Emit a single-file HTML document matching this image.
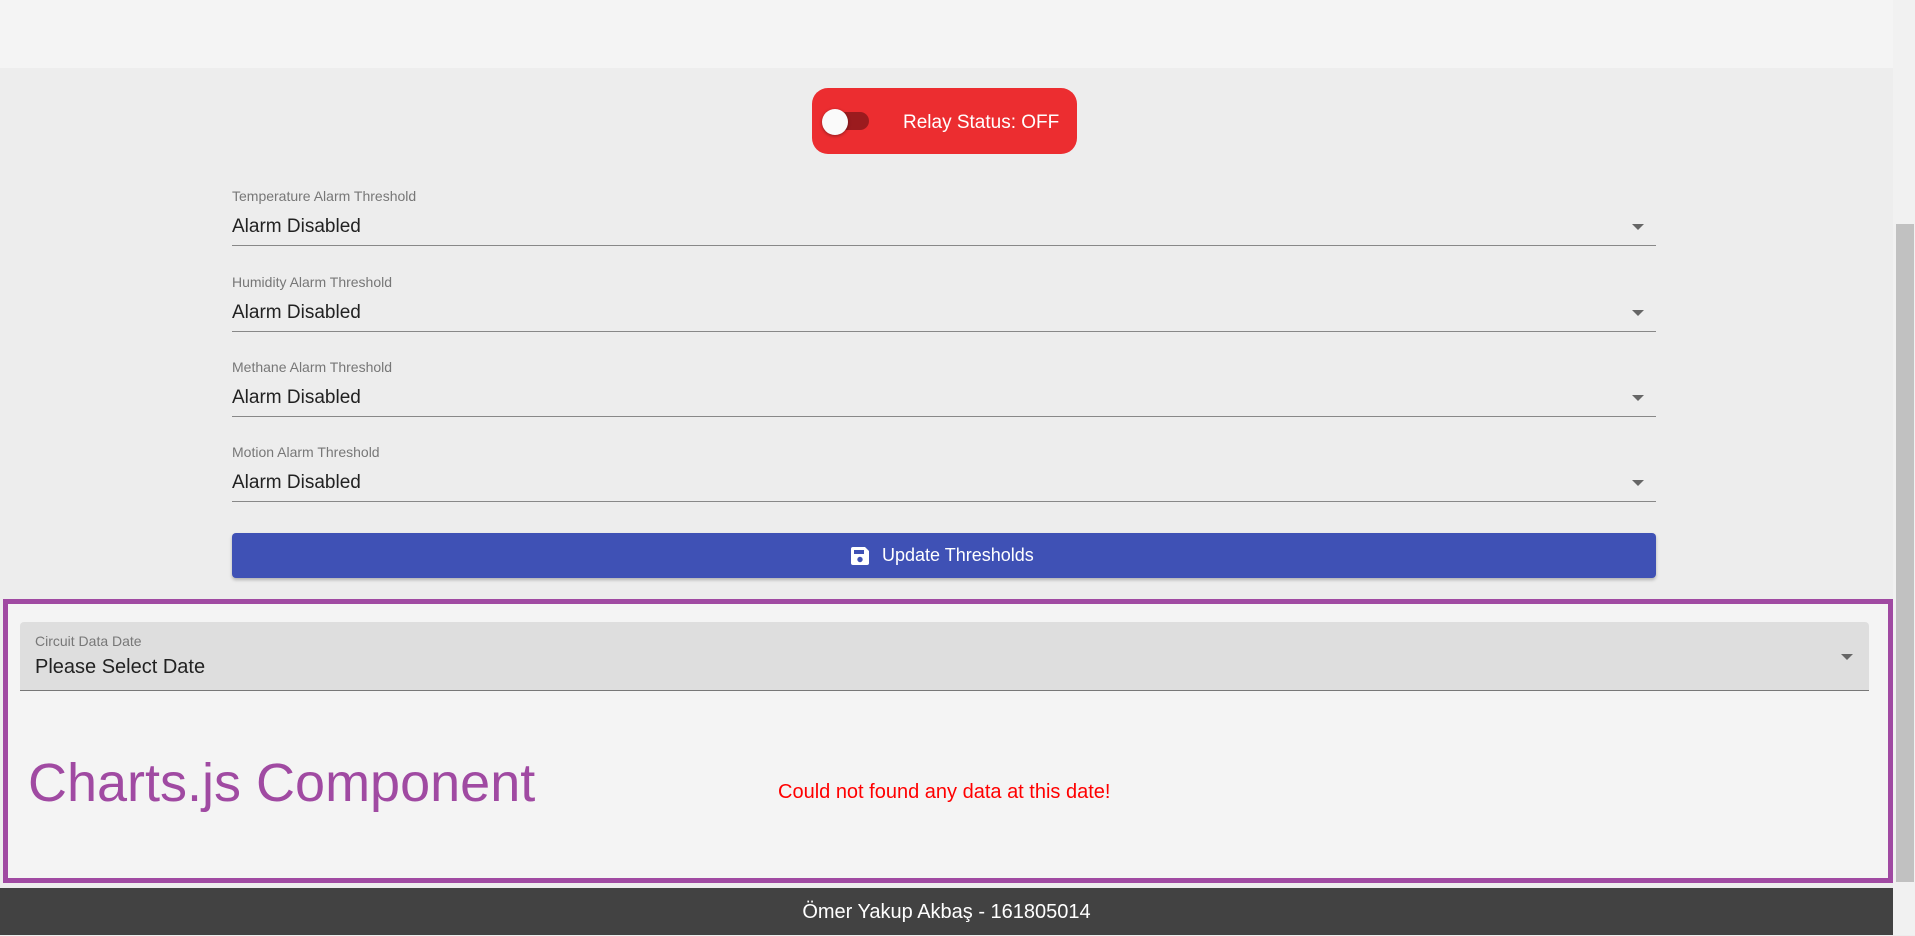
<!DOCTYPE html>
<html><head><meta charset="utf-8"><style>
*{box-sizing:border-box;margin:0;padding:0}
body{width:1915px;height:935px;overflow:hidden;background:#ededed;font-family:"Liberation Sans",Roboto,sans-serif;position:relative}
.top{position:absolute;left:0;top:0;width:1893px;height:68px;background:#f4f4f4}
.sb{position:absolute;left:1893px;top:0;width:22px;height:935px;background:#f1f1f1}
.thumb{position:absolute;left:1896px;top:224px;width:18px;height:658px;background:#c1c1c1}
.relay{position:absolute;left:812px;top:88px;width:265px;height:66px;background:#ec2d30;border-radius:16px;color:#fff}
.track{position:absolute;left:11px;top:24px;width:46px;height:18px;border-radius:9px;background:#9b1b1e}
.knob{position:absolute;left:10px;top:21px;width:26px;height:26px;border-radius:50%;background:#fafafa;box-shadow:0 1px 3px rgba(0,0,0,.4)}
.relay span{position:absolute;left:91px;top:24px;font-size:19px}
.f{position:absolute;left:232px;width:1424px;height:60px;border-bottom:1.5px solid #888}
.f .l{position:absolute;left:0;top:2px;font-size:14px;color:#777}
.f .v{position:absolute;left:0;top:30px;font-size:19px;color:#222}
.arr{position:absolute;right:12px;width:0;height:0;border-left:6px solid transparent;border-right:6px solid transparent;border-top:6px solid #666}
.btn{position:absolute;left:232px;top:533px;width:1424px;height:45px;background:#3f51b5;border-radius:4px;box-shadow:0 2px 3px rgba(0,0,0,.25);color:#fff;font-size:18px}
.btn span{position:absolute;left:650px;top:12px}
.box{position:absolute;left:3px;top:599px;width:1890px;height:284px;border:5px solid #a04aa2;background:#f4f4f4}
.sel{position:absolute;left:20px;top:622px;width:1849px;height:69px;background:#dedede;border-radius:4px 4px 0 0;border-bottom:1.5px solid #777}
.sel .l{position:absolute;left:15px;top:11px;font-size:14px;color:#777}
.sel .v{position:absolute;left:15px;top:34px;font-size:20px;color:#222}
.cj{position:absolute;left:28px;top:752px;font-size:54px;color:#a04aa2;font-family:"Liberation Sans",sans-serif}
.err{position:absolute;left:778px;top:781px;font-size:20px;color:#f00}
.foot{position:absolute;left:0;top:888px;width:1893px;height:47px;background:#424242;color:#fff;font-size:20px;text-align:center;line-height:48px}
</style></head><body>
<div class="top"></div>
<div class="sb"></div><div class="thumb"></div>
<div class="relay"><div class="track"></div><div class="knob"></div><span>Relay Status: OFF</span></div>

<div class="f" style="top:186px"><div class="l">Temperature Alarm Threshold</div><div class="v">Alarm Disabled</div><div class="arr" style="top:38px"></div></div>
<div class="f" style="top:272px"><div class="l">Humidity Alarm Threshold</div><div class="v">Alarm Disabled</div><div class="arr" style="top:38px"></div></div>
<div class="f" style="top:357px"><div class="l">Methane Alarm Threshold</div><div class="v">Alarm Disabled</div><div class="arr" style="top:38px"></div></div>
<div class="f" style="top:442px"><div class="l">Motion Alarm Threshold</div><div class="v">Alarm Disabled</div><div class="arr" style="top:38px"></div></div>

<div class="btn"><svg style="position:absolute;left:618px;top:13px" width="20" height="20" viewBox="0 0 20 20"><path d="M1 3a2 2 0 0 1 2-2h12l4 4v12a2 2 0 0 1-2 2H3a2 2 0 0 1-2-2z" fill="#fff"/><rect x="4" y="4" width="10" height="4" fill="#3f51b5"/><circle cx="10" cy="13.5" r="2.7" fill="#3f51b5"/></svg><span>Update Thresholds</span></div>

<div class="box"></div>
<div class="sel"><div class="l">Circuit Data Date</div><div class="v">Please Select Date</div><div class="arr" style="top:32px;right:16px"></div></div>
<div class="cj">Charts.js Component</div>
<div class="err">Could not found any data at this date!</div>
<div class="foot">Ömer Yakup Akbaş - 161805014</div>
</body></html>
